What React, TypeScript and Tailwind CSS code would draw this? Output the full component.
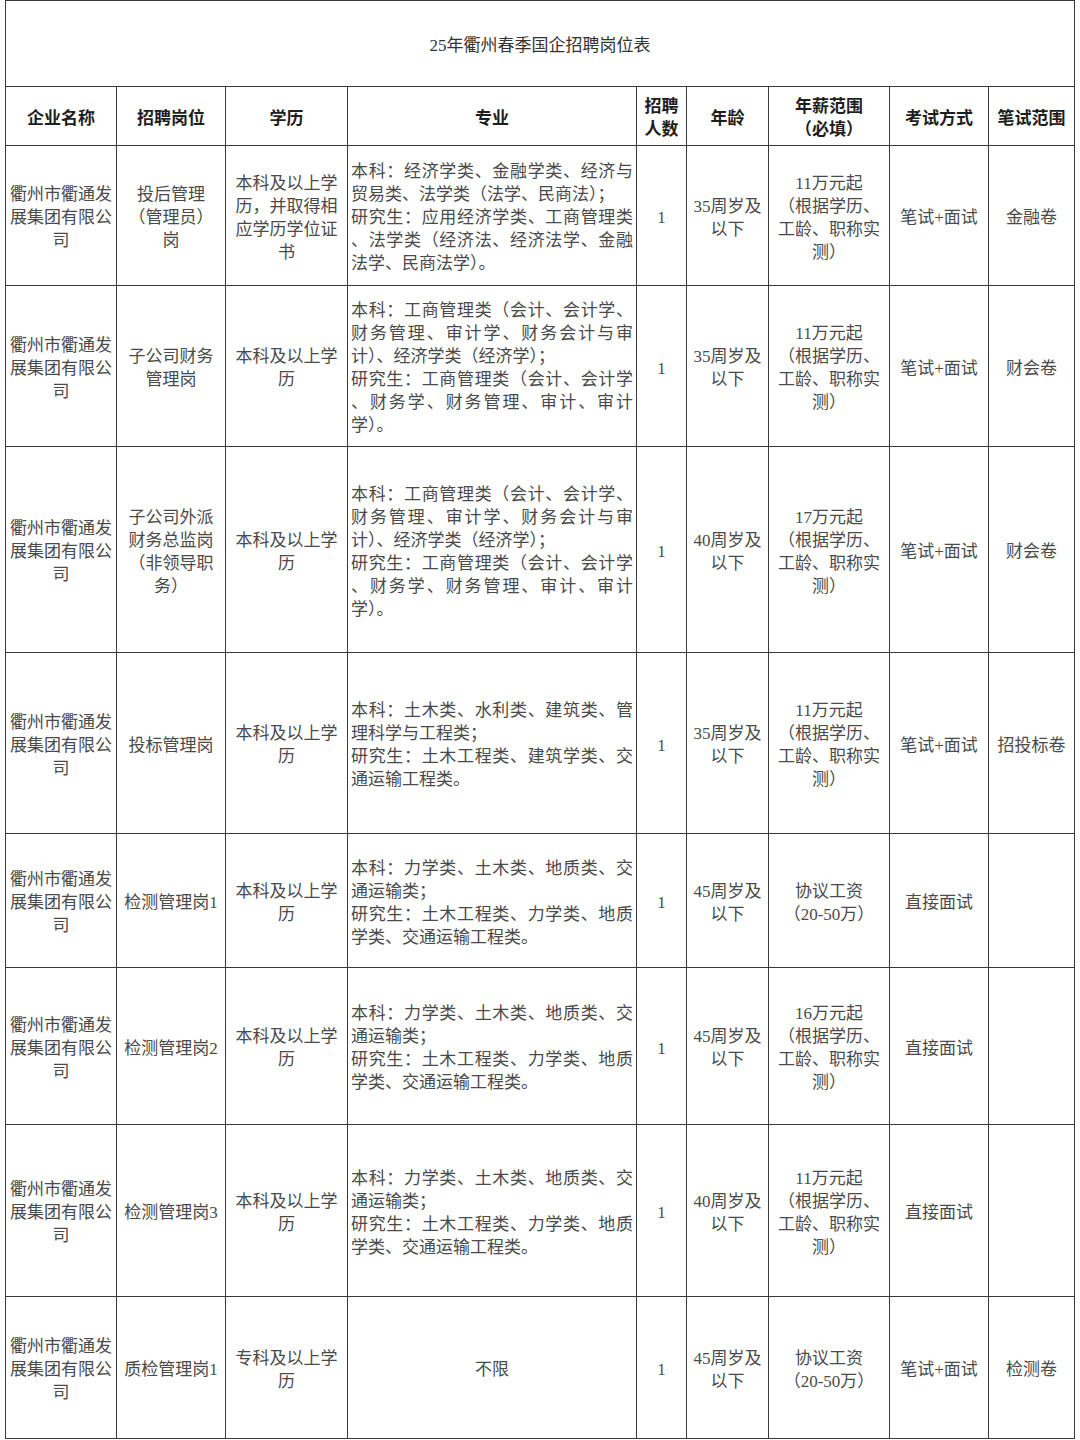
const FONT = "font-['Liberation_Serif','Noto_Sans_CJK_SC',serif]"

const COLS = "grid-cols-[111px_109px_122px_289px_50px_82px_121px_99px_86px]"

type Row = {
  h: string
  company: string[]
  post: string[]
  edu: string[]
  major: string[]
  majorCenter?: boolean
  count: string
  age: string[]
  pay: string[]
  exam: string
  scope: string
}

const company = ["衢州市衢通发", "展集团有限公", "司"]
const payStd = (base: string) => [base, "（根据学历、", "工龄、职称实", "测）"]
const finance = [
  "本科：工商管理类（会计、会计学、",
  "财务管理、审计学、财务会计与审",
  "计）、经济学类（经济学）；",
  "研究生：工商管理类（会计、会计学",
  "、财务学、财务管理、审计、审计",
  "学）。",
]
const testing = [
  "本科：力学类、土木类、地质类、交",
  "通运输类；",
  "研究生：土木工程类、力学类、地质",
  "学类、交通运输工程类。",
]

const rows: Row[] = [
  {
    h: "h-[140px]",
    company,
    post: ["投后管理", "（管理员）", "岗"],
    edu: ["本科及以上学", "历，并取得相", "应学历学位证", "书"],
    major: [
      "本科：经济学类、金融学类、经济与",
      "贸易类、法学类（法学、民商法）；",
      "研究生：应用经济学类、工商管理类",
      "、法学类（经济法、经济法学、金融",
      "法学、民商法学）。",
    ],
    count: "1",
    age: ["35周岁及", "以下"],
    pay: payStd("11万元起"),
    exam: "笔试+面试",
    scope: "金融卷",
  },
  {
    h: "h-[161px]",
    company,
    post: ["子公司财务", "管理岗"],
    edu: ["本科及以上学", "历"],
    major: finance,
    count: "1",
    age: ["35周岁及", "以下"],
    pay: payStd("11万元起"),
    exam: "笔试+面试",
    scope: "财会卷",
  },
  {
    h: "h-[206px]",
    company,
    post: ["子公司外派", "财务总监岗", "（非领导职", "务）"],
    edu: ["本科及以上学", "历"],
    major: finance,
    count: "1",
    age: ["40周岁及", "以下"],
    pay: payStd("17万元起"),
    exam: "笔试+面试",
    scope: "财会卷",
  },
  {
    h: "h-[181px]",
    company,
    post: ["投标管理岗"],
    edu: ["本科及以上学", "历"],
    major: [
      "本科：土木类、水利类、建筑类、管",
      "理科学与工程类；",
      "研究生：土木工程类、建筑学类、交",
      "通运输工程类。",
    ],
    count: "1",
    age: ["35周岁及", "以下"],
    pay: payStd("11万元起"),
    exam: "笔试+面试",
    scope: "招投标卷",
  },
  {
    h: "h-[134px]",
    company,
    post: ["检测管理岗1"],
    edu: ["本科及以上学", "历"],
    major: testing,
    count: "1",
    age: ["45周岁及", "以下"],
    pay: ["协议工资", "（20-50万）"],
    exam: "直接面试",
    scope: "",
  },
  {
    h: "h-[157px]",
    company,
    post: ["检测管理岗2"],
    edu: ["本科及以上学", "历"],
    major: testing,
    count: "1",
    age: ["45周岁及", "以下"],
    pay: payStd("16万元起"),
    exam: "直接面试",
    scope: "",
  },
  {
    h: "h-[172px]",
    company,
    post: ["检测管理岗3"],
    edu: ["本科及以上学", "历"],
    major: testing,
    count: "1",
    age: ["40周岁及", "以下"],
    pay: payStd("11万元起"),
    exam: "直接面试",
    scope: "",
  },
  {
    h: "h-[142px]",
    company,
    post: ["质检管理岗1"],
    edu: ["专科及以上学", "历"],
    major: ["不限"],
    majorCenter: true,
    count: "1",
    age: ["45周岁及", "以下"],
    pay: ["协议工资", "（20-50万）"],
    exam: "笔试+面试",
    scope: "检测卷",
  },
]

function Cell({ lines, className = "" }: { lines: string[]; className?: string }) {
  return (
    <div className={`flex items-center justify-center border-r border-b border-[#3a3a3a] pt-[4px] text-center ${className}`}>
      <div>
        {lines.map((line, i) => (
          <div key={i}>{line}</div>
        ))}
      </div>
    </div>
  )
}

function Major({ lines, center }: { lines: string[]; center?: boolean }) {
  if (center) return <Cell lines={lines} />
  return (
    <div className="flex items-center border-r border-b border-[#3a3a3a] px-[3px] pt-[4px]">
      <div className="w-full">
        {lines.map((line, i) => {
          const last = line.endsWith("；") || line.endsWith("。")
          return (
            <div key={i} className={last ? "text-left" : "text-justify [text-align-last:justify]"}>
              {line}
            </div>
          )
        })}
      </div>
    </div>
  )
}

const headers: string[][] = [
  ["企业名称"],
  ["招聘岗位"],
  ["学历"],
  ["专业"],
  ["招聘", "人数"],
  ["年龄"],
  ["年薪范围", "（必填）"],
  ["考试方式"],
  ["笔试范围"],
]

export default function App() {
  return (
    <div className={`h-[1440px] w-[1080px] bg-white ${FONT} text-[17px] leading-[23px] text-[#4a4a4a]`}>
      <div className="ml-[5px] w-[1070px] border-t border-l border-[#3a3a3a]">
        <div className="flex h-[86px] items-center justify-center border-r border-b border-[#3a3a3a] pt-[4px] text-[17px] text-[#333]">
          25年衢州春季国企招聘岗位表
        </div>
        <div className={`grid h-[59px] ${COLS} font-bold text-[#1e1e1e]`}>
          {headers.map((h, i) => (
            <Cell key={i} lines={h} />
          ))}
        </div>
        {rows.map((r, i) => (
          <div key={i} className={`grid ${r.h} ${COLS}`}>
            <Cell lines={r.company} />
            <Cell lines={r.post} />
            <Cell lines={r.edu} />
            <Major lines={r.major} center={r.majorCenter} />
            <Cell lines={[r.count]} />
            <Cell lines={r.age} />
            <Cell lines={r.pay} />
            <Cell lines={[r.exam]} />
            <Cell lines={r.scope ? [r.scope] : []} />
          </div>
        ))}
      </div>
    </div>
  )
}
